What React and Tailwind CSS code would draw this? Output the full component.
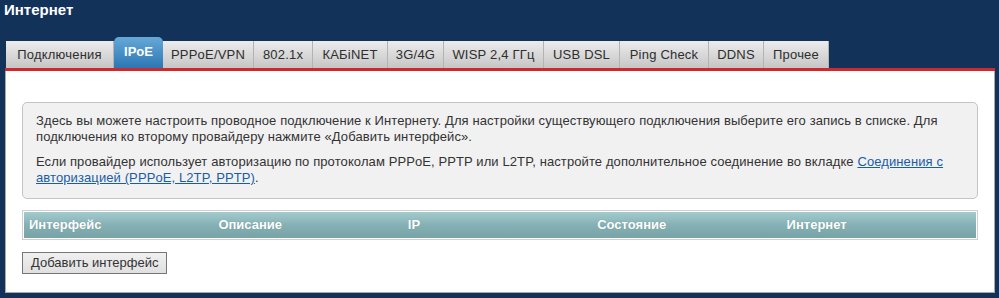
import React from 'react'

const tabs = [
  ['Подключения', 'w-[108px]'],
  ['IPoE', 'w-[49px]'],
  ['PPPoE/VPN', 'w-[91px]'],
  ['802.1x', 'w-[59px]'],
  ['КАБiNET', 'w-[75px]'],
  ['3G/4G', 'w-[56px]'],
  ['WISP 2,4 ГГц', 'w-[100px]'],
  ['USB DSL', 'w-[76px]'],
  ['Ping Check', 'w-[89px]'],
  ['DDNS', 'w-[55px]'],
  ['Прочее', 'w-[65px]'],
]
const columns = ['Интерфейс', 'Описание', 'IP', 'Состояние', 'Интернет']

export default function App() {
  return (
    <div className="h-[298px] w-[999px] overflow-hidden bg-[#12325a] font-['Liberation_Sans',Arial,sans-serif] text-[#333]">
      {/* Page title */}
      <h1 className="h-[37px] pl-[4px] pt-[1px] text-[15px] font-bold leading-[18px] text-white">Интернет</h1>

      {/* Tab strip */}
      <div className="ml-[6px] flex h-[31px] items-end">
        {tabs.map(([t, w]) =>
          t === 'IPoE' ? (
            <div
              key={t}
              className={`${w} flex h-[31px] items-center justify-center rounded-t-[5px] bg-gradient-to-b from-[#66a9d8] to-[#2a77b4] pb-[2px] text-[13px] font-bold text-white`}
            >
              {t}
            </div>
          ) : (
            <div
              key={t}
              className={`${w} flex h-[27px] items-center justify-center border-r border-[#b3b3b3] bg-gradient-to-b from-[#ececec] to-[#c6c6c6] text-[13px] tracking-[0.2px] text-[#2e2e2e]`}
            >
              {t}
            </div>
          )
        )}
      </div>

      {/* Panel */}
      <div className="ml-[5px] w-[990px] border-t-[3px] border-[#d0282c]">
        <div className="h-[222px] border-x border-b border-[#a9a9a9] bg-white px-[16px] pt-[31px]">
          <div className="rounded-[5px] border border-[#c4c4c4] bg-[#f1f1f1] px-[13px] pt-[10px] pb-[12px] text-[13px] leading-[16px] tracking-[0.1px] text-[#333]">
            <p>
              Здесь вы можете настроить проводное подключение к Интернету. Для настройки существующего подключения выберите его запись в списке. Для подключения ко второму провайдеру нажмите «Добавить интерфейс».
            </p>
            <p className="mt-[9px]">
              Если провайдер использует авторизацию по протоколам PPPoE, PPTP или L2TP, настройте дополнительное соединение во вкладке{' '}
              <a href="#" className="text-[#1a5ca6] underline">
                Соединения с авторизацией (PPPoE, L2TP, PPTP)
              </a>
              .
            </p>
          </div>

          <div className="mt-[11px] border border-[#cfcfcf]">
            <div className="grid h-[28px] grid-cols-5 items-center border border-white bg-gradient-to-b from-[#a3cbce] via-[#86b1b4] to-[#78a3a6] pl-[5px] text-[13px] font-bold text-white [text-shadow:0_0_1px_rgba(0,0,0,0.2)]">
              {columns.map((c) => (
                <div key={c}>{c}</div>
              ))}
            </div>
          </div>

          <button className="mt-[12px] h-[22px] border border-[#767676] bg-gradient-to-b from-[#f0f0f0] to-[#e0e0e0] px-[8px] text-[13px] leading-[18px] text-[#333]">
            Добавить интерфейс
          </button>
        </div>
      </div>
    </div>
  )
}
